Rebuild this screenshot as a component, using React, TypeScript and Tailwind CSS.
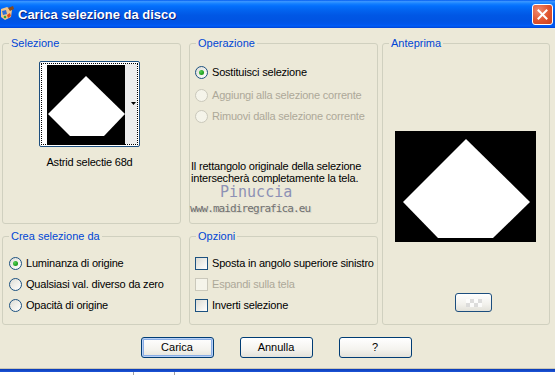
import React from "react";

const font = { fontFamily: '"Liberation Sans", Arial, sans-serif' };

function Radio({ checked, disabled }: { checked?: boolean; disabled?: boolean }) {
  return (
    <span
      className={
        "relative inline-flex h-[13px] w-[13px] shrink-0 items-center justify-center rounded-full border " +
        (disabled
          ? "border-[#CAC8BB] bg-[#F5F4EA]"
          : "border-[#1C5180] bg-[linear-gradient(135deg,#DCDCD6_0%,#F0EFEA_50%,#FFFFFF_100%)]")
      }
    >
      {checked && (
        <span className="h-[5px] w-[5px] rounded-full bg-[radial-gradient(circle_at_35%_35%,#55D055_0%,#21A121_60%,#1A8A1A_100%)]" />
      )}
    </span>
  );
}

function Check({ disabled }: { disabled?: boolean }) {
  return (
    <span
      className={
        "inline-block h-[13px] w-[13px] shrink-0 border " +
        (disabled
          ? "border-[#CAC8BB] bg-[#F5F4EA]"
          : "border-[#1C5180] bg-[linear-gradient(135deg,#DCDCD6_0%,#EEEDE8_50%,#FFFFFF_100%)]")
      }
    />
  );
}

function Group({
  label,
  className,
  children,
}: {
  label: string;
  className?: string;
  children?: React.ReactNode;
}) {
  return (
    <div className={"relative rounded-[3px] border border-[#D0D0BF] " + (className || "")}>
      <span className="absolute left-[6px] top-[-8px] bg-[#ECE9D8] px-[2px] text-[11px] leading-[14px] text-[#0046D5]">
        {label}
      </span>
      {children}
    </div>
  );
}

function Btn({ children, def }: { children: React.ReactNode; def?: boolean }) {
  return (
    <div
      className={
        "flex h-[21px] w-[73px] items-center justify-center rounded-[3px] border border-[#003C74] bg-[linear-gradient(to_bottom,#FFFFFF_0%,#F4F3EE_60%,#E3E2DA_100%)] text-[11px] text-black " +
        (def ? "shadow-[inset_0_0_0_1px_#B8D0F6,inset_0_0_0_2px_#89ADE4]" : "")
      }
    >
      {children}
    </div>
  );
}

export default function App() {
  return (
    <div
      className="relative flex h-[375px] w-[555px] flex-col overflow-hidden bg-[#ECE9D8] text-black"
      style={font}
    >
      {/* Title bar */}
      <div className="flex h-[28px] shrink-0 items-center bg-[linear-gradient(to_bottom,#0058EE_0%,#3A93FF_5%,#288EFF_9%,#127DFF_14%,#036FFC_22%,#0262EE_38%,#0057E5_55%,#0054E3_72%,#0055EB_86%,#005BF5_91%,#0055E8_96%,#003DD7_100%)]">
        <svg width="14" height="18" viewBox="0 0 14 18" className="ml-[1px] mr-[3px] shrink-0">
          <path d="M0 4 L6 2 L11 5 L10 12 L4 15 L0 12 Z" fill="#F2C38A" />
          <path d="M1 6 L5 5 L6 9 L2 10 Z" fill="#2E6FD8" />
          <path d="M6 10 L9 8 L10 11 L7 13 Z" fill="#E04A1A" />
          <path d="M7 3 L12 1 L13 4 L9 6 Z" fill="#8B4A18" />
          <circle cx="4" cy="12" r="1.3" fill="#35A035" />
        </svg>
        <span
          className="text-[13px] font-bold leading-none text-white [text-shadow:1px_1px_0_#0A1E7A]"
          style={font}
        >
          Carica selezione da disco
        </span>
        <div className="ml-auto mr-[2px] flex h-[21px] w-[21px] items-center justify-center rounded-[3px] border border-white bg-[radial-gradient(circle_at_30%_30%,#F08A70_0%,#E0542E_55%,#C8401E_100%)]">
          <svg width="11" height="11" viewBox="0 0 11 11">
            <path d="M1.5 1.5 L9.5 9.5 M9.5 1.5 L1.5 9.5" stroke="white" strokeWidth="2" strokeLinecap="square" />
          </svg>
        </div>
      </div>

      {/* Body */}
      <div className="flex h-[340px] shrink-0 flex-col px-[2px] pt-[15px]">
        <div className="flex">
          <div className="flex flex-col gap-[12px]">
            <div className="flex gap-[8px]">
              {/* Selezione */}
              <Group label="Selezione" className="h-[181px] w-[179px]">
                <div className="flex flex-col items-center pt-[17px]">
                  <div className="ml-[-5px] flex h-[86px] w-[101px] items-center rounded-[2px] border border-[#1C4E7E] bg-white p-[1px]">
                    <div className="relative flex h-full w-full border border-dotted border-black">
                      <div className="ml-[5px] mt-[1px] h-[80px] w-[78px] bg-black">
                        <svg width="78" height="80" viewBox="0 0 78 80">
                          <polygon points="39,11 1,49 23,71 57,71 78,49" fill="white" />
                        </svg>
                      </div>
                      <div className="relative flex-1 bg-[#EDEDED]">
                        <svg width="5" height="3" viewBox="0 0 5 3" className="absolute right-[1px] top-[38px]">
                          <polygon points="0,0 5,0 2.5,3" fill="black" />
                        </svg>
                      </div>
                    </div>
                  </div>
                  <div className="ml-[-4px] mt-[9px] text-[11px] leading-[13px] tracking-[-0.2px]">
                    Astrid selectie 68d
                  </div>
                </div>
              </Group>

              {/* Operazione */}
              <Group label="Operazione" className="h-[181px] w-[189px]">
                <div className="flex flex-col pl-[4px] pt-[18px] text-[11px] tracking-[-0.2px]">
                  <div className="flex h-[21px] items-center gap-[4px] pl-[1px]">
                    <Radio checked />
                    <span>Sostituisci selezione</span>
                  </div>
                  <div className="mt-[2px] flex h-[21px] items-center gap-[4px] pl-[1px] text-[#ACA899]">
                    <Radio disabled />
                    <span>Aggiungi alla selezione corrente</span>
                  </div>
                  <div className="flex h-[21px] items-center gap-[4px] pl-[1px] text-[#ACA899]">
                    <Radio disabled />
                    <span>Rimuovi dalla selezione corrente</span>
                  </div>
                  <div className="ml-[-3px] mt-[33px] leading-[12px]">
                    Il rettangolo originale della selezione
                    <br />
                    intersecherà completamente la tela.
                  </div>
                </div>
              </Group>
            </div>

            <div className="flex gap-[8px]">
              {/* Crea selezione da */}
              <Group label="Crea selezione da" className="h-[89px] w-[179px]">
                <div className="flex flex-col pl-[6px] pt-[16px] text-[11px] tracking-[-0.2px]">
                  <div className="flex h-[21px] items-center gap-[4px]">
                    <Radio checked />
                    <span>Luminanza di origine</span>
                  </div>
                  <div className="flex h-[21px] items-center gap-[4px]">
                    <Radio />
                    <span>Qualsiasi val. diverso da zero</span>
                  </div>
                  <div className="flex h-[20px] items-center gap-[4px]">
                    <Radio />
                    <span>Opacità di origine</span>
                  </div>
                </div>
              </Group>

              {/* Opzioni */}
              <Group label="Opzioni" className="h-[89px] w-[189px]">
                <div className="flex flex-col pl-[5px] pt-[16px] text-[11px] tracking-[-0.2px]">
                  <div className="flex h-[21px] items-center gap-[4px]">
                    <Check />
                    <span>Sposta in angolo superiore sinistro</span>
                  </div>
                  <div className="flex h-[21px] items-center gap-[4px] text-[#ACA899]">
                    <Check disabled />
                    <span>Espandi sulla tela</span>
                  </div>
                  <div className="flex h-[20px] items-center gap-[4px]">
                    <Check />
                    <span>Inverti selezione</span>
                  </div>
                </div>
              </Group>
            </div>
          </div>

          {/* Anteprima */}
          <Group label="Anteprima" className="ml-[4px] h-[282px] w-[168px]">
            <div className="flex flex-col pl-[12px] pt-[87px]">
              <div className="h-[111px] w-[141px] bg-black">
                <svg width="141" height="111" viewBox="0 0 141 111">
                  <polygon points="71,8 8,71 43,107 98,107 135,71" fill="white" />
                </svg>
              </div>
              <div className="ml-[60px] mt-[51px] flex h-[19px] w-[37px] items-center justify-center rounded-[3px] border border-[#1C4E7E] bg-[linear-gradient(to_bottom,#FFFFFF_0%,#F2F1EC_60%,#E2E1D9_100%)]">
                <div className="grid grid-cols-4 opacity-80">
                  {Array.from({ length: 8 }).map((_, i) => (
                    <span
                      key={i}
                      className={
                        "h-[4px] w-[4px] " +
                        ((i + Math.floor(i / 4)) % 2 === 0 ? "bg-white" : "bg-[#D8D8D8]")
                      }
                    />
                  ))}
                </div>
              </div>
            </div>
          </Group>
        </div>

        {/* Buttons */}
        <div className="mt-[12px] flex justify-center gap-[26px] pr-[3px]">
          <Btn def>Carica</Btn>
          <Btn>Annulla</Btn>
          <Btn>?</Btn>
        </div>
      </div>

      {/* Bottom edge */}
      <div className="h-[1px] shrink-0 bg-[#C9C6B6]" />
      <div className="h-[3px] shrink-0 bg-[linear-gradient(to_bottom,#0A3BB5,#1D55D8)]" />
      <div className="flex flex-1 bg-white">
        <div className="ml-[133px] w-[1px] bg-[#A0A0A0]" />
        <div className="ml-[40px] w-[1px] bg-[#A0A0A0]" />
      </div>

      {/* Watermark */}
      <div className="pointer-events-none absolute left-[190px] top-[184px] flex flex-col">
        <span
          className="ml-[30px] text-[15px] leading-[16px] text-[#8D91B5]"
          style={{ fontFamily: '"DejaVu Sans Mono", monospace' }}
        >
          Pinuccia
        </span>
        <span
          className="mt-[2px] text-[11px] leading-[13px] text-[#707070] [text-shadow:1px_1px_0_#D8D6C8]"
          style={{ fontFamily: '"DejaVu Sans Mono", monospace', letterSpacing: "-0.9px" }}
        >
          www.maidiregrafica.eu
        </span>
      </div>
    </div>
  );
}
